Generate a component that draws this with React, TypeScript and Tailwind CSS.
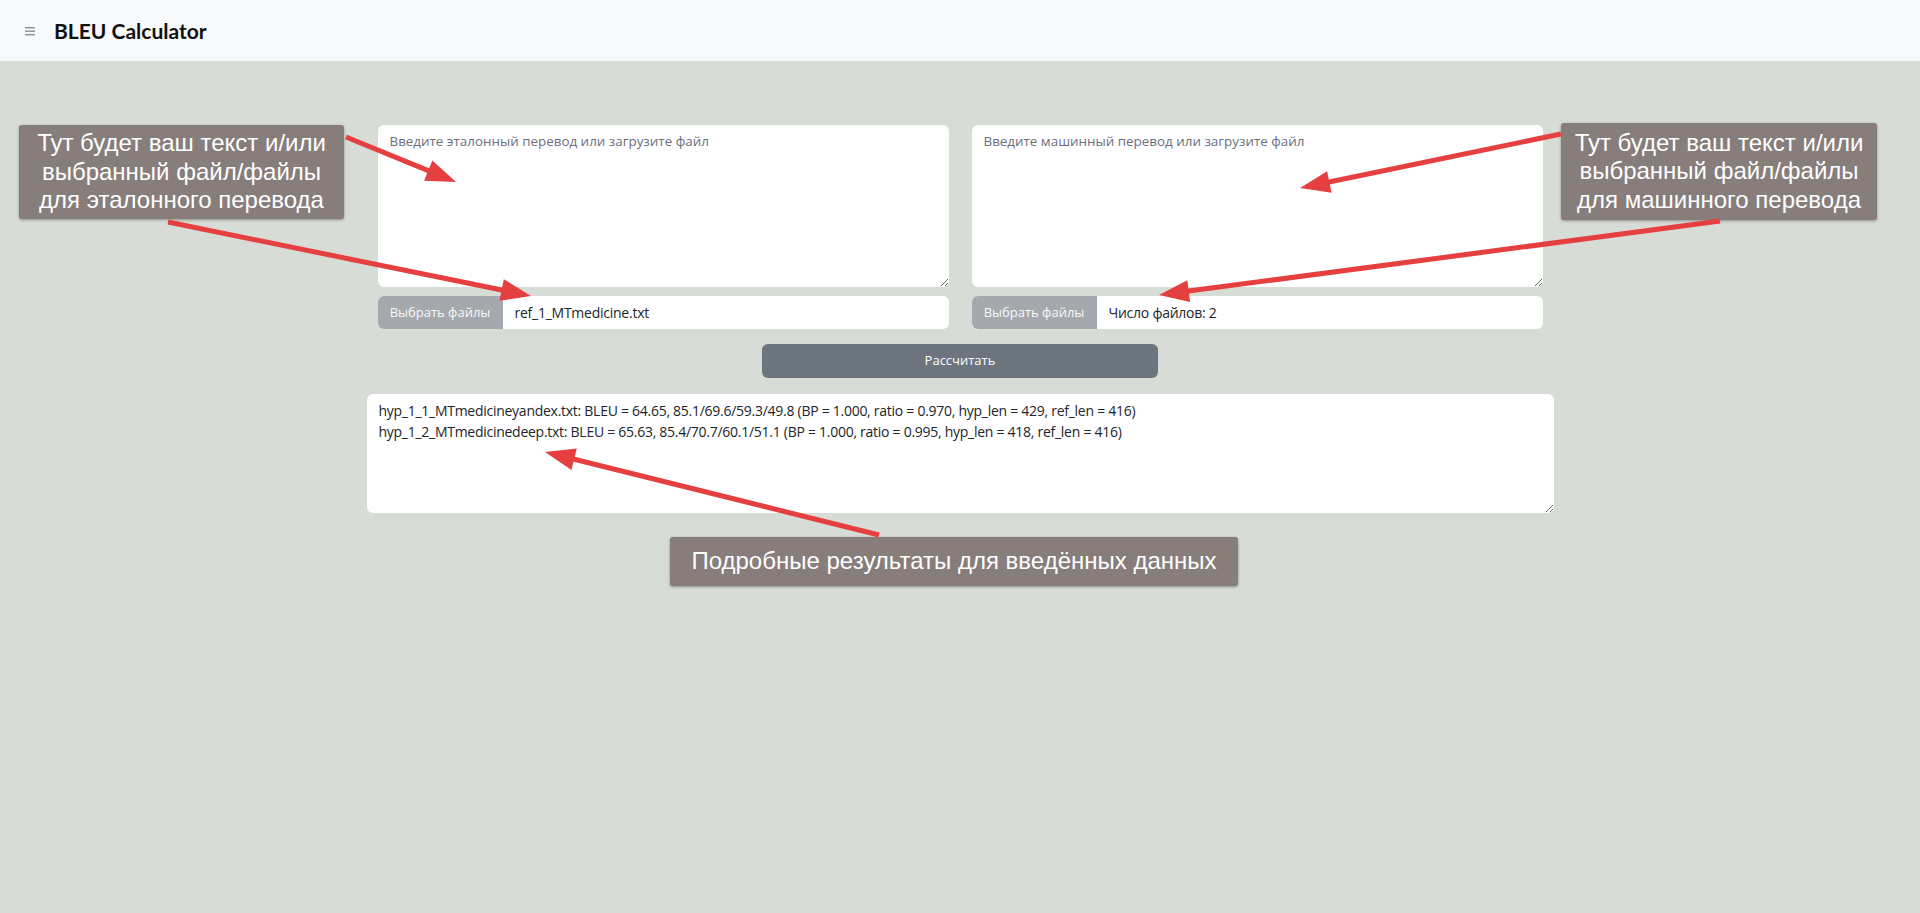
import React from 'react';

type Pt = [number, number];

const Arrow: React.FC<{ from: Pt; to: Pt }> = ({ from, to }) => {
    const dx = to[0] - from[0];
    const dy = to[1] - from[1];
    const len = Math.hypot(dx, dy);
    const ux = dx / len;
    const uy = dy / len;
    const headLen = 30;
    const headW = 11;
    const bx = to[0] - ux * headLen;
    const by = to[1] - uy * headLen;
    const p1 = `${bx - uy * headW},${by + ux * headW}`;
    const p2 = `${bx + uy * headW},${by - ux * headW}`;
    return (
        <g>
            <line x1={from[0]} y1={from[1]} x2={bx + ux * 4} y2={by + uy * 4} stroke="#e63f3f" strokeWidth="5" />
            <polygon points={`${to[0]},${to[1]} ${p1} ${p2}`} fill="#e63f3f" />
        </g>
    );
};

const Callout: React.FC<{ className: string; lines: string[] }> = ({ className, lines }) => (
    <div
        className={`absolute bg-[#877d7b] rounded-[3px] shadow-[0_1px_3px_rgba(0,0,0,0.35)] text-white text-[24px] leading-[28.5px] text-center flex flex-col justify-center ${className}`}
        style={{ fontFamily: '"Liberation Sans", Arial, sans-serif' }}
    >
        {lines.map((l) => (
            <span key={l}>{l}</span>
        ))}
    </div>
);

const FileInput: React.FC<{ label: string }> = ({ label }) => (
    <div className="mt-[9px] h-[33px] flex bg-white rounded-[6px] overflow-hidden">
        <div className="w-[125px] bg-[#a5a8ad] text-[#f8f9fa] text-[13px] flex items-center justify-center">
            Выбрать файлы
        </div>
        <div className="flex items-center pl-3 text-[14px] tracking-[-0.25px] text-[#212529]">{label}</div>
    </div>
);

export default function App() {
    const ui = { fontFamily: '"Open Sans", "Noto Sans", sans-serif' };
    return (
        <div className="relative h-[913px] bg-[#d8dcd6] overflow-hidden" style={ui}>
            {/* Header */}
            <header className="h-[61px] bg-[#f8f9fa] flex items-center pl-[25px]">
                <svg width="10" height="9" viewBox="0 0 10 9" className="mr-[19px] mt-[2px]">
                    <rect x="0" y="0" width="10" height="1.4" fill="#8a8d91" />
                    <rect x="0" y="3.5" width="10" height="1.4" fill="#8a8d91" />
                    <rect x="0" y="7" width="10" height="1.4" fill="#8a8d91" />
                </svg>
                <h1
                    className="text-[21px] font-bold text-[#111]"
                    style={{ fontFamily: 'Lato, "Open Sans", sans-serif' }}
                >
                    BLEU Calculator
                </h1>
            </header>

            <main className="pt-[64px] flex flex-col items-center">
                {/* Inputs */}
                <div className="flex gap-[23px]">
                    <div className="w-[571px]">
                        <textarea
                            className="block w-full h-[162px] bg-white rounded-[6px] px-3 py-[7px] text-[13.4px] leading-[19px] text-[#212529] placeholder:text-[#6c6f80] outline-none"
                            placeholder="Введите эталонный перевод или загрузите файл"
                            style={ui}
                        />
                        <FileInput label="ref_1_MTmedicine.txt" />
                    </div>
                    <div className="w-[571px]">
                        <textarea
                            className="block w-full h-[162px] bg-white rounded-[6px] px-3 py-[7px] text-[13.4px] leading-[19px] text-[#212529] placeholder:text-[#6c6f80] outline-none"
                            placeholder="Введите машинный перевод или загрузите файл"
                            style={ui}
                        />
                        <FileInput label="Число файлов: 2" />
                    </div>
                </div>

                <button className="mt-[15px] w-[396px] h-[34px] bg-[#6c757d] rounded-[6px] text-white text-[13px]">
                    Рассчитать
                </button>

                {/* Results */}
                <textarea
                    readOnly
                    className="mt-[16px] block w-[1187px] h-[119px] bg-white rounded-[6px] px-3 py-[6px] text-[14px] tracking-[-0.27px] leading-[21px] text-[#212529] outline-none"
                    style={ui}
                    value={
                        'hyp_1_1_MTmedicineyandex.txt: BLEU = 64.65, 85.1/69.6/59.3/49.8 (BP = 1.000, ratio = 0.970, hyp_len = 429, ref_len = 416)\n' +
                        'hyp_1_2_MTmedicinedeep.txt: BLEU = 65.63, 85.4/70.7/60.1/51.1 (BP = 1.000, ratio = 0.995, hyp_len = 418, ref_len = 416)'
                    }
                />
            </main>

            {/* Annotations */}
            <Callout
                className="left-[19px] top-[125px] w-[325px] h-[94px]"
                lines={['Тут будет ваш текст и/или', 'выбранный файл/файлы', 'для эталонного перевода']}
            />
            <Callout
                className="left-[1561px] top-[123px] w-[316px] h-[97px]"
                lines={['Тут будет ваш текст и/или', 'выбранный файл/файлы', 'для машинного перевода']}
            />
            <Callout
                className="left-[670px] top-[537px] w-[568px] h-[49px]"
                lines={['Подробные результаты для введённых данных']}
            />

            <svg className="absolute inset-0 pointer-events-none" width="1920" height="913" viewBox="0 0 1920 913">
                <Arrow from={[346, 137]} to={[456, 182]} />
                <Arrow from={[168, 222]} to={[531, 296]} />
                <Arrow from={[1561, 134]} to={[1300, 188]} />
                <Arrow from={[1720, 221]} to={[1159, 295]} />
                <Arrow from={[879, 535]} to={[545, 452]} />
            </svg>
        </div>
    );
}
